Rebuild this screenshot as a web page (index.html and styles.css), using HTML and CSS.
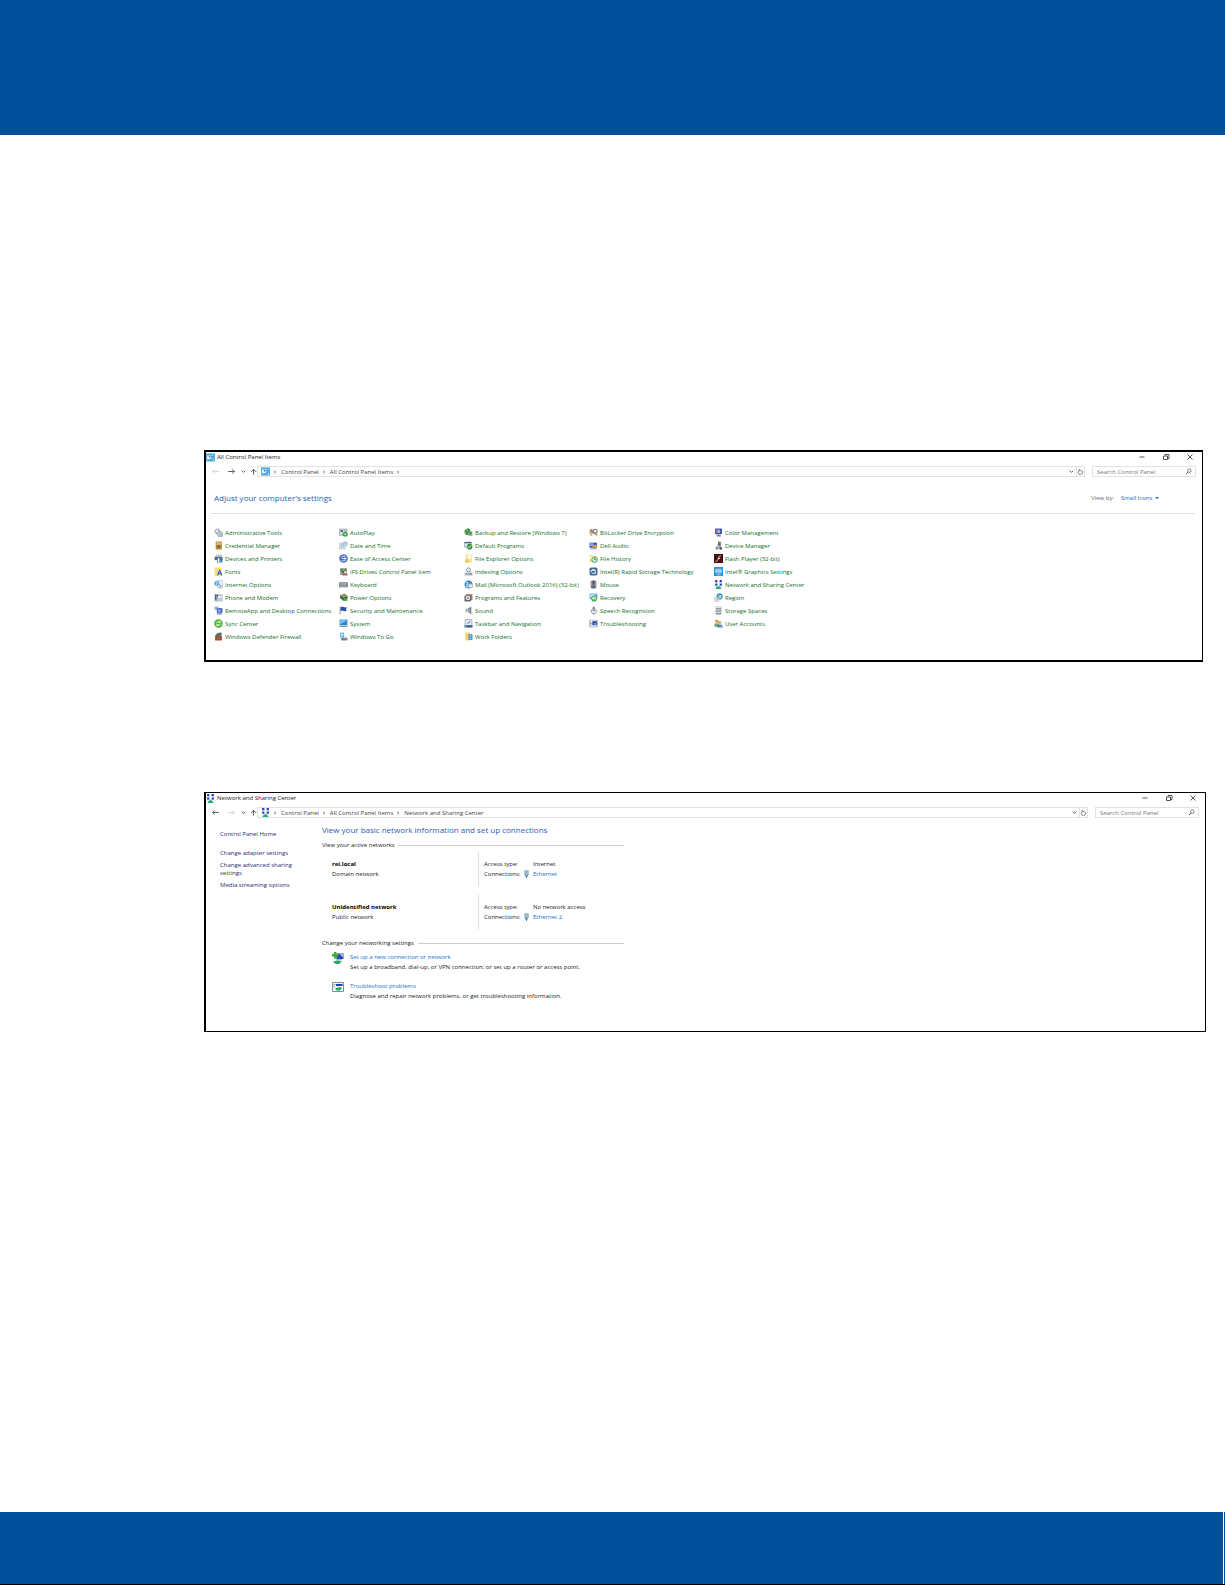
FILE: index.html
```
<!DOCTYPE html>
<html lang="en">
<head>
  <meta charset="UTF-8" />
  <title>Network setup</title>
  <meta name="viewport" content="width=device-width, initial-scale=1.0" />
  <link rel="stylesheet" href="styles.css">
</head>
<body>
  <!-- icon set -->
  <svg class="sprite" aria-hidden="true">
    <symbol id="cpanel" viewBox="0 0 16 16"><rect y="1" width="16" height="14" fill="#2b9be0"/><rect x="1" y="3" width="14" height="11" fill="#8fd4f7"/><circle cx="5" cy="8" r="3" fill="#fff"/><path d="M5 8V5a3 3 0 0 1 3 3z" fill="#1266b0"/><path d="M10 6h4M10 9h4M3 12.500h9" stroke="#1266b0" stroke-width="1.500"/></symbol>
    <symbol id="netcenter" viewBox="0 0 16 16"><path d="M2 0h4v4H2zM10 0h4v4h-4zM2 6h4v4H2zM10 6h4v4h-4z" fill="#2a3fb8"/><path d="M1 5h6M9 5h6M1 11h5M10 11h5" stroke="#a9bbd6" fill="none"/><path d="M3 14l5-4 5 4v2H3z" fill="#1fae6b"/></symbol>
    <symbol id="gears" viewBox="0 0 16 16"><circle cx="6" cy="6" r="4" fill="#e3e8ec" stroke="#8d99a3" stroke-width="2.500" stroke-dasharray="2 1"/><path d="M7 7h8v8H7z" fill="#dfe5ea" stroke="#7d8c99"/><path d="M9 9v5M11 9v5M13 9v5" stroke="#7d8c99"/></symbol>
    <symbol id="safe" viewBox="0 0 16 16"><rect x="3" y="1" width="11" height="14" rx="1" fill="#b98a3c"/><rect x="4" y="2" width="9" height="5" fill="#d9b36b"/><circle cx="8.500" cy="10" r="2.500" fill="#7d5a22"/></symbol>
    <symbol id="printer" viewBox="0 0 16 16"><path d="M4 1h9l2 4H2z" fill="#b9c6d2"/><path d="M1 5h14v6H1z" fill="#586b7c"/><rect x="6" y="7" width="4" height="8" fill="#fff" stroke="#586b7c"/><rect x="11" y="8" width="4" height="7" fill="#2f80c8"/></symbol>
    <symbol id="fonts" viewBox="0 0 16 16"><path d="M1 1h10l3 3v11H1z" fill="#fbdc7c"/><path d="M6 15l4-9 4 9M8 12h5" fill="none" stroke="#1d67ad" stroke-width="2"/></symbol>
    <symbol id="internet" viewBox="0 0 16 16"><path d="M7 1h8v13H7z" fill="#eef4f9" stroke="#93a8ba"/><circle cx="5" cy="6" r="4.500" fill="#5faede"/><path d="M3 3l3 2-2 4" stroke="#fff" fill="none"/><path d="M9 8l3 2-2 4" stroke="#4b86b5" stroke-width="1.500" fill="none"/></symbol>
    <symbol id="phone" viewBox="0 0 16 16"><rect x="1" y="3" width="14" height="12" fill="#9eacba"/><path d="M3 2v10M6 2v4" stroke="#485868" stroke-width="2"/><rect x="7" y="5" width="7" height="4" fill="#e7f2fb"/><path d="M6 11h8M6 13h8" stroke="#fff"/></symbol>
    <symbol id="remote" viewBox="0 0 16 16"><path d="M1 1h7v6H1z" fill="#9fb3c6"/><path d="M5 4h10v8H5z" fill="#3b53bd"/><path d="M6 5l8 3-6 3z" fill="#8eb7f0"/><path d="M5 14h9" stroke="#6b7888" stroke-width="2"/></symbol>
    <symbol id="sync" viewBox="0 0 16 16"><circle cx="8" cy="8" r="7.500" fill="#45b32f"/><path d="M4 8a4 4 0 0 1 7-2M12 8a4 4 0 0 1-7 2M11 3v3H8M5 13v-3h3" fill="none" stroke="#fff" stroke-width="1.500"/></symbol>
    <symbol id="firewall" viewBox="0 0 16 16"><path d="M2 6h12v9H2z" fill="#93462f"/><path d="M2 9h12M2 12h12M6 6v3M10 9v3M6 12v3" stroke="#b87a62"/><path d="M3 7c0-4 6-6 9-6l3 3c-3 0-5 3-7 4z" fill="#45705e"/></symbol>
    <symbol id="autoplay" viewBox="0 0 16 16"><path d="M1 2h13v11H1z" fill="#d4dde4" stroke="#74838f"/><path d="M3 4h4v3H3z" fill="#35566e"/><path d="M9 5h4M9 7h4" stroke="#74838f"/><circle cx="11" cy="11" r="4.500" fill="#36a93f"/><path d="M10 9l3 2-3 2z" fill="#fff"/></symbol>
    <symbol id="datetime" viewBox="0 0 16 16"><path d="M1 4h10v10H1z" fill="#eaf2f8" stroke="#9db3c4"/><path d="M3 7h6M3 10h6M4 5v8M7 5v8" stroke="#8fb5d2"/><circle cx="11" cy="5" r="4" fill="#cfe5f5" stroke="#7ba3c0"/><path d="M11 3v2h2" fill="none" stroke="#47708e"/></symbol>
    <symbol id="access" viewBox="0 0 16 16"><circle cx="8" cy="8" r="7.500" fill="#4b69c7"/><path d="M4 6a5 5 0 0 1 8-1M12 10a5 5 0 0 1-8 1M5 8h7M10 6l2 2-2 2" fill="none" stroke="#fff" stroke-width="1.500"/></symbol>
    <symbol id="ifs" viewBox="0 0 16 16"><path d="M2 2h12v12H2z" fill="#90a08e"/><path d="M3 3l5 5 5-5v3l-5 5-5-5z" fill="#36683a"/><path d="M6 12h9v3H6z" fill="#bb4a56"/><circle cx="11" cy="9" r="2" fill="#f2f2f2"/></symbol>
    <symbol id="keyboard" viewBox="0 0 16 16"><rect y="4" width="16" height="9" fill="#7f8991"/><path d="M1 6h14M1 8.500h14M3 11h10" stroke="#c9cfd4" stroke-dasharray="1.500 .5"/></symbol>
    <symbol id="power" viewBox="0 0 16 16"><path d="M2 4l8-3 5 4-8 4z" fill="#7e9b6b"/><path d="M2 4v5l5 4V8zM15 5v5l-8 4V9z" fill="#394f38"/><path d="M8 9h7v5H8z" fill="#4aa253"/></symbol>
    <symbol id="flag" viewBox="0 0 16 16"><path d="M2 1v14" stroke="#93a3b6" stroke-width="2"/><path d="M3 2c4-2 6 2 12 0l-3 4 2 3c-5 1-7-2-11 0z" fill="#2b4fa8"/></symbol>
    <symbol id="system" viewBox="0 0 16 16"><rect x="1" y="1" width="14" height="10" fill="#2d8ad6"/><path d="M2 2h12L2 9z" fill="#83c9f5"/><path d="M1 13h14" stroke="#8296a6" stroke-width="2.500"/></symbol>
    <symbol id="togo" viewBox="0 0 16 16"><path d="M2 1h7v9H2z" fill="#5cb7e6"/><path d="M2 5h7M5 1v9" stroke="#fff"/><path d="M4 10h11v5H4z" fill="#70818f"/><path d="M9 8h5v3H9z" fill="#d2dbe2"/></symbol>
    <symbol id="backup" viewBox="0 0 16 16"><circle cx="6" cy="7" r="5.500" fill="#78b96c"/><path d="M6 1l4 3-4 3M3 4l3 8" fill="none" stroke="#2a7a35" stroke-width="2"/><path d="M8 6h7v8H8z" fill="#98a6b0"/><circle cx="11" cy="9" r="3" fill="#47995b"/></symbol>
    <symbol id="defaults" viewBox="0 0 16 16"><path d="M1 2h12v9H1z" fill="#dfe6ec" stroke="#788995"/><path d="M1 3h12" stroke="#3c5f85" stroke-width="2"/><circle cx="10" cy="10" r="5" fill="#30973d"/><path d="M7 10l2 2 4-4" stroke="#fff" stroke-width="1.500" fill="none"/></symbol>
    <symbol id="explorer" viewBox="0 0 16 16"><path d="M3 1h11v14H3z" fill="#fbdd85"/><path d="M6 2h7v7H6z" fill="#fff8df"/><path d="M2 10h7v5H2z" fill="#e6b84a"/><path d="M4 12h4" stroke="#fff"/></symbol>
    <symbol id="indexing" viewBox="0 0 16 16"><path d="M1 10h14v5H1z" fill="#a6b1bb"/><path d="M3 9l2-3h7l2 3z" fill="#dbe2e8"/><circle cx="8" cy="5" r="3.500" fill="#eef5fa" stroke="#71808d" stroke-width="1.500"/><path d="M10 12h4" stroke="#41586c"/></symbol>
    <symbol id="mail" viewBox="0 0 16 16"><circle cx="8" cy="8" r="7" fill="#3d8cc9"/><path d="M3 4c4 0 5 2 3 4s-1 4 1 6" stroke="#c5e4f6" stroke-width="2" fill="none"/><path d="M8 7h7v6H8z" fill="#fff" stroke="#8097aa"/><path d="M8 7l3 3 4-3" stroke="#8097aa" fill="none"/></symbol>
    <symbol id="programs" viewBox="0 0 16 16"><path d="M3 2h12v11H3z" fill="#96836a"/><path d="M1 5h11v10H1z" fill="#555c62"/><circle cx="7" cy="9" r="4" fill="#e7eaed"/><circle cx="7" cy="9" r="1.500" fill="#555c62"/></symbol>
    <symbol id="sound" viewBox="0 0 16 16"><path d="M3 5h4l6-4v14l-5-4H3z" fill="#79828a"/><path d="M4 6h3v4H4z" fill="#dde1e4"/><path d="M9 5v7" stroke="#b7bec3" stroke-width="2"/></symbol>
    <symbol id="taskbar" viewBox="0 0 16 16"><path d="M2 1h12v13H2z" fill="#e7f0f8" stroke="#6e8498"/><path d="M1 11h14v4H1z" fill="#34588b"/><path d="M5 8l5-5 2 1-5 5z" fill="#6d95c0"/><path d="M2 13h3" stroke="#fff"/></symbol>
    <symbol id="workfolders" viewBox="0 0 16 16"><path d="M2 1h9v14H2z" fill="#f8d567"/><path d="M8 4h7v10H8z" fill="#2d88c8"/><path d="M10 6h3v2h-3zM10 10h3v2h-3z" fill="#fff"/></symbol>
    <symbol id="bitlocker" viewBox="0 0 16 16"><path d="M1 3h8v7H1z" fill="#b4a18a"/><path d="M3 2l3 5 4 1 4 5" fill="none" stroke="#b3872d" stroke-width="2.500"/><circle cx="11" cy="6" r="3.500" fill="none" stroke="#7c8792" stroke-width="2"/><circle cx="4" cy="12" r="2" fill="#d8ad45"/></symbol>
    <symbol id="audio" viewBox="0 0 16 16"><path d="M1 3h13v9H1z" fill="#3453ae"/><path d="M2 4h6v5H2z" fill="#8bace9"/><path d="M6 9l5-3 4 2-2 3H6z" fill="#e39b39"/><path d="M3 14h10" stroke="#778" stroke-width="1.500"/></symbol>
    <symbol id="history" viewBox="0 0 16 16"><path d="M1 2h5l2 2h6v10H1z" fill="#f5d473"/><path d="M2 4h5v7H2z" fill="#fff3ca"/><circle cx="10" cy="10" r="5" fill="#d8ecd7" stroke="#3a9b4a" stroke-width="1.500"/><path d="M10 7v3h3" fill="none" stroke="#277238" stroke-width="1.500"/></symbol>
    <symbol id="rapid" viewBox="0 0 16 16"><rect x="1" y="1" width="14" height="14" rx="3" fill="#3c6692"/><path d="M4 10a4 4 0 1 1 5 2M4 6h7M5 11h7" fill="none" stroke="#fff" stroke-width="1.500"/></symbol>
    <symbol id="mouse" viewBox="0 0 16 16"><rect x="3" y="1" width="10" height="14" rx="3" fill="#626b73"/><path d="M5 3v8M11 3v8" stroke="#bac1c7" stroke-width="1.500"/><path d="M8 2v5" stroke="#222"/></symbol>
    <symbol id="recovery" viewBox="0 0 16 16"><path d="M1 1h14v10H1z" fill="#59aee0"/><path d="M2 2h11L2 9z" fill="#b8e1f7"/><circle cx="9" cy="10" r="5" fill="#46a94b"/><path d="M7 10a2.500 2.500 0 1 1 3 2M6 8l1 3 3-1" fill="none" stroke="#fff" stroke-width="1.500"/></symbol>
    <symbol id="speech" viewBox="0 0 16 16"><rect x="6" y="1" width="5" height="9" rx="2.500" fill="#9aa4ad"/><path d="M4 6v3a4.500 4.500 0 0 0 9 0V6M8.500 13v3M7 3h3M7 5h3" fill="none" stroke="#7f8991" stroke-width="1.500"/></symbol>
    <symbol id="trouble" viewBox="0 0 16 16"><path d="M1 2h14v12H1z" fill="#eef1f4" stroke="#8a97a3"/><path d="M6 4h8v7H6z" fill="#233fa5"/><path d="M3 5v7M2 8h3" stroke="#6e7c88"/><path d="M8 9l4-3v5z" fill="#8bbcf1"/></symbol>
    <symbol id="color" viewBox="0 0 16 16"><path d="M2 1h12v10H2z" fill="#3344ad"/><path d="M6 3h4v6H6z" fill="#f4e15e"/><path d="M8 3h3v6H8z" fill="#53c2e8"/><path d="M3 3h3v6H3z" fill="#b054c7"/><path d="M8 11v3M5 14h7" stroke="#656e7c" stroke-width="2"/></symbol>
    <symbol id="device" viewBox="0 0 16 16"><path d="M7 1h5v8H7z" fill="#59636c"/><path d="M8 3h2" stroke="#fff"/><path d="M3 11l3-3h5l3 3v3H3z" fill="#a9b3bb"/><path d="M4 12h2v3H4zM10 11h4v4h-4z" fill="#3d4853"/></symbol>
    <symbol id="flash" viewBox="0 0 16 16"><rect x="0" y="0" width="16" height="16" fill="#4a0d10"/><path d="M12 3c-4 0-4 5-5 7-1 2-2 3-4 3M7 8h4" fill="none" stroke="#fff" stroke-width="1.500"/></symbol>
    <symbol id="intel" viewBox="0 0 16 16"><rect width="16" height="16" fill="#2f93d2"/><path d="M2 3h12v8H2z" fill="#7dc8ef"/><path d="M3 9c4-6 8 2 11-3M8 11v3M5 14h7" stroke="#dff3fd" fill="none"/></symbol>
    <symbol id="region" viewBox="0 0 16 16"><circle cx="10" cy="6" r="5.500" fill="#4293c4"/><path d="M7 3l3 2 3-2v5l-3 2z" fill="#b3e0ee"/><circle cx="5" cy="11" r="4" fill="#eef2f5" stroke="#8796a3"/><path d="M5 9v2h2" fill="none" stroke="#4d5d6a"/></symbol>
    <symbol id="storage" viewBox="0 0 16 16"><path d="M3 1h10v14H3z" fill="#a7b0b7"/><path d="M4 3h8M4 7h8M4 11h8" stroke="#fff" stroke-width="1.500"/><path d="M3 5h10M3 9h10M3 14h10" stroke="#626c74"/></symbol>
    <symbol id="users" viewBox="0 0 16 16"><circle cx="5" cy="4" r="3" fill="#cfa15e"/><path d="M1 8h8v6H1z" fill="#76a657"/><circle cx="10" cy="6" r="3" fill="#d9b078"/><path d="M6 10h8v5H6z" fill="#4f78b5"/><path d="M12 11h4v4h-4z" fill="#9ea8b0"/></symbol>
    <symbol id="plug" viewBox="0 0 10 16"><rect x="1" y="1" width="8" height="9" rx="1" fill="#b6cfdf" stroke="#7f9fb4"/><path d="M4 2v5M6 2v5" stroke="#5f8199"/><path d="M2 9h6v4H2z" fill="#5b9dca"/><path d="M5 12v4" stroke="#3b8bc2" stroke-width="2"/></symbol>
    <symbol id="newconn" viewBox="0 0 24 24"><path d="M9 3h14v11H9z" fill="#2a45b5"/><path d="M15 4h7v7z" fill="#9dc3f4"/><path d="M4 0h5v4h4v5H9v4H4V9H0V4h4z" fill="#39b034"/><path d="M8 14h12v3H8z" fill="#a7b6c4"/><path d="M2 19l9-2 9 2-6 5H7z" fill="#23a768"/></symbol>
    <symbol id="fixnet" viewBox="0 0 24 24"><path d="M1 3h22v18H1z" fill="#f3f6f9" stroke="#8090a0" stroke-width="2"/><path d="M8 6h13v4H8z" fill="#2340ae"/><path d="M3 7h4M3 11h3" stroke="#8a99a6" stroke-width="2"/><path d="M6 15l9-3 5 2-4 5H9z" fill="#1fae65"/></symbol>
    <symbol id="left" viewBox="0 0 16 16"><path d="M14 8H3M7 4L3 8l4 4" fill="none" stroke="currentColor" stroke-width="1.500"/></symbol>
    <symbol id="right" viewBox="0 0 16 16"><path d="M2 8h11M9 4l4 4-4 4" fill="none" stroke="currentColor" stroke-width="1.500"/></symbol>
    <symbol id="up" viewBox="0 0 16 16"><path d="M8 15V3M2 9l6-6 6 6" fill="none" stroke="currentColor" stroke-width="2"/></symbol>
    <symbol id="down" viewBox="0 0 16 16"><path d="M4 6l4 4 4-4" fill="none" stroke="currentColor" stroke-width="2"/></symbol>
    <symbol id="sep" viewBox="0 0 16 16"><path d="M6 5l4 3-4 3" fill="none" stroke="currentColor" stroke-width="2"/></symbol>
    <symbol id="refresh" viewBox="0 0 16 16"><path d="M5 6a5 5 0 1 0 6 0M5 2v4h5" fill="none" stroke="currentColor" stroke-width="1.500"/></symbol>
    <symbol id="search" viewBox="0 0 16 16"><circle cx="10" cy="6" r="4" fill="none" stroke="currentColor" stroke-width="1.500"/><path d="M7 9l-5 5" stroke="currentColor" stroke-width="2"/></symbol>
    <symbol id="min" viewBox="0 0 16 16"><path d="M3 8h10" stroke="currentColor" stroke-width="1.500"/></symbol>
    <symbol id="restore" viewBox="0 0 16 16"><path d="M3 6h8v7H3zM6 5V3h8v8h-3" fill="none" stroke="currentColor" stroke-width="1.500"/></symbol>
    <symbol id="close" viewBox="0 0 16 16"><path d="M3 3l10 10M13 3L3 13" stroke="currentColor" stroke-width="1.500"/></symbol>
  </svg>

  <header class="band"></header>

  <main class="page">
    <section class="window window-all">
      <div class="titlebar">
        <svg class="icon"><use href="#cpanel"/></svg>
        <span class="title">All Control Panel Items</span>
        <div class="controls">
          <button aria-label="Minimize"><svg><use href="#min"/></svg></button>
          <button aria-label="Restore"><svg><use href="#restore"/></svg></button>
          <button aria-label="Close"><svg><use href="#close"/></svg></button>
        </div>
      </div>
      <div class="toolbar">
        <nav class="history">
          <button class="off" aria-label="Back"><svg><use href="#left"/></svg></button>
          <button aria-label="Forward"><svg><use href="#right"/></svg></button>
          <button class="small" aria-label="Recent"><svg><use href="#down"/></svg></button>
          <button class="small" aria-label="Up"><svg><use href="#up"/></svg></button>
        </nav>
        <div class="address">
          <svg class="icon"><use href="#cpanel"/></svg>
          <svg class="sep"><use href="#sep"/></svg>
          <a href="#">Control Panel</a>
          <svg class="sep"><use href="#sep"/></svg>
          <a href="#">All Control Panel Items</a>
          <svg class="sep"><use href="#sep"/></svg>
          <button class="drop" aria-label="Previous locations"><svg><use href="#down"/></svg></button>
          <button class="reload" aria-label="Refresh"><svg><use href="#refresh"/></svg></button>
        </div>
        <label class="search">
          <input type="text" placeholder="Search Control Panel" aria-label="Search Control Panel">
          <svg><use href="#search"/></svg>
        </label>
      </div>
      <div class="settings-head">
        <h1>Adjust your computer's settings</h1>
        <label for="view">View by:</label>
        <select id="view"><option>Small icons</option><option>Large icons</option></select>
        <svg class="caret" viewBox="0 0 8 8"><path d="M0 2h8L4 6z" fill="#1a66b8"/></svg>
      </div>
      <ul class="items">
        <li><a href="#"><svg class="icon"><use href="#gears"/></svg>Administrative Tools</a></li>
        <li><a href="#"><svg class="icon"><use href="#safe"/></svg>Credential Manager</a></li>
        <li><a href="#"><svg class="icon"><use href="#printer"/></svg>Devices and Printers</a></li>
        <li><a href="#"><svg class="icon"><use href="#fonts"/></svg>Fonts</a></li>
        <li><a href="#"><svg class="icon"><use href="#internet"/></svg>Internet Options</a></li>
        <li><a href="#"><svg class="icon"><use href="#phone"/></svg>Phone and Modem</a></li>
        <li><a href="#"><svg class="icon"><use href="#remote"/></svg>RemoteApp and Desktop Connections</a></li>
        <li><a href="#"><svg class="icon"><use href="#sync"/></svg>Sync Center</a></li>
        <li><a href="#"><svg class="icon"><use href="#firewall"/></svg>Windows Defender Firewall</a></li>
        <li><a href="#"><svg class="icon"><use href="#autoplay"/></svg>AutoPlay</a></li>
        <li><a href="#"><svg class="icon"><use href="#datetime"/></svg>Date and Time</a></li>
        <li><a href="#"><svg class="icon"><use href="#access"/></svg>Ease of Access Center</a></li>
        <li><a href="#"><svg class="icon"><use href="#ifs"/></svg>IFS Drives Control Panel Item</a></li>
        <li><a href="#"><svg class="icon"><use href="#keyboard"/></svg>Keyboard</a></li>
        <li><a href="#"><svg class="icon"><use href="#power"/></svg>Power Options</a></li>
        <li><a href="#"><svg class="icon"><use href="#flag"/></svg>Security and Maintenance</a></li>
        <li><a href="#"><svg class="icon"><use href="#system"/></svg>System</a></li>
        <li><a href="#"><svg class="icon"><use href="#togo"/></svg>Windows To Go</a></li>
        <li><a href="#"><svg class="icon"><use href="#backup"/></svg>Backup and Restore (Windows 7)</a></li>
        <li><a href="#"><svg class="icon"><use href="#defaults"/></svg>Default Programs</a></li>
        <li><a href="#"><svg class="icon"><use href="#explorer"/></svg>File Explorer Options</a></li>
        <li><a href="#"><svg class="icon"><use href="#indexing"/></svg>Indexing Options</a></li>
        <li><a href="#"><svg class="icon"><use href="#mail"/></svg>Mail (Microsoft Outlook 2016) (32-bit)</a></li>
        <li><a href="#"><svg class="icon"><use href="#programs"/></svg>Programs and Features</a></li>
        <li><a href="#"><svg class="icon"><use href="#sound"/></svg>Sound</a></li>
        <li><a href="#"><svg class="icon"><use href="#taskbar"/></svg>Taskbar and Navigation</a></li>
        <li><a href="#"><svg class="icon"><use href="#workfolders"/></svg>Work Folders</a></li>
        <li><a href="#"><svg class="icon"><use href="#bitlocker"/></svg>BitLocker Drive Encryption</a></li>
        <li><a href="#"><svg class="icon"><use href="#audio"/></svg>Dell Audio</a></li>
        <li><a href="#"><svg class="icon"><use href="#history"/></svg>File History</a></li>
        <li><a href="#"><svg class="icon"><use href="#rapid"/></svg>Intel(R) Rapid Storage Technology</a></li>
        <li><a href="#"><svg class="icon"><use href="#mouse"/></svg>Mouse</a></li>
        <li><a href="#"><svg class="icon"><use href="#recovery"/></svg>Recovery</a></li>
        <li><a href="#"><svg class="icon"><use href="#speech"/></svg>Speech Recognition</a></li>
        <li><a href="#"><svg class="icon"><use href="#trouble"/></svg>Troubleshooting</a></li>
        <li class="first"><a href="#"><svg class="icon"><use href="#color"/></svg>Color Management</a></li>
        <li><a href="#"><svg class="icon"><use href="#device"/></svg>Device Manager</a></li>
        <li><a href="#"><svg class="icon"><use href="#flash"/></svg>Flash Player (32-bit)</a></li>
        <li><a href="#"><svg class="icon"><use href="#intel"/></svg>Intel® Graphics Settings</a></li>
        <li><a href="#"><svg class="icon"><use href="#netcenter"/></svg>Network and Sharing Center</a></li>
        <li><a href="#"><svg class="icon"><use href="#region"/></svg>Region</a></li>
        <li><a href="#"><svg class="icon"><use href="#storage"/></svg>Storage Spaces</a></li>
        <li><a href="#"><svg class="icon"><use href="#users"/></svg>User Accounts</a></li>
      </ul>
    </section>

    <section class="window window-net">
      <div class="titlebar">
        <svg class="icon"><use href="#netcenter"/></svg>
        <span class="title">Network and Sharing Center</span>
        <div class="controls">
          <button aria-label="Minimize"><svg><use href="#min"/></svg></button>
          <button aria-label="Restore"><svg><use href="#restore"/></svg></button>
          <button aria-label="Close"><svg><use href="#close"/></svg></button>
        </div>
      </div>
      <div class="toolbar">
        <nav class="history">
          <button aria-label="Back"><svg><use href="#left"/></svg></button>
          <button class="off" aria-label="Forward"><svg><use href="#right"/></svg></button>
          <button class="small" aria-label="Recent"><svg><use href="#down"/></svg></button>
          <button class="small" aria-label="Up"><svg><use href="#up"/></svg></button>
        </nav>
        <div class="address">
          <svg class="icon"><use href="#netcenter"/></svg>
          <svg class="sep"><use href="#sep"/></svg>
          <a href="#">Control Panel</a>
          <svg class="sep"><use href="#sep"/></svg>
          <a href="#">All Control Panel Items</a>
          <svg class="sep"><use href="#sep"/></svg>
          <a href="#">Network and Sharing Center</a>
          <button class="drop" aria-label="Previous locations"><svg><use href="#down"/></svg></button>
          <button class="reload" aria-label="Refresh"><svg><use href="#refresh"/></svg></button>
        </div>
        <label class="search">
          <input type="text" placeholder="Search Control Panel" aria-label="Search Control Panel">
          <svg><use href="#search"/></svg>
        </label>
      </div>
      <div class="columns">
        <aside class="side">
          <a class="home" href="#">Control Panel Home</a>
          <a href="#">Change adapter settings</a>
          <a href="#">Change advanced sharing settings</a>
          <a href="#">Media streaming options</a>
        </aside>
        <div class="content">
          <h1>View your basic network information and set up connections</h1>
          <h2>View your active networks</h2>
          <div class="network">
            <div class="name"><b>rei.local</b><span>Domain network</span></div>
            <dl>
              <dt>Access type:</dt><dd>Internet</dd>
              <dt>Connections:<svg class="plug"><use href="#plug"/></svg></dt><dd><a href="#">Ethernet</a></dd>
            </dl>
          </div>
          <div class="network">
            <div class="name"><b>Unidentified network</b><span>Public network</span></div>
            <dl>
              <dt>Access type:</dt><dd>No network access</dd>
              <dt>Connections:<svg class="plug"><use href="#plug"/></svg></dt><dd><a href="#">Ethernet 2</a></dd>
            </dl>
          </div>
          <h2 class="change">Change your networking settings</h2>
          <div class="task">
            <svg><use href="#newconn"/></svg>
            <div>
              <a href="#">Set up a new connection or network</a>
              <p>Set up a broadband, dial-up, or VPN connection; or set up a router or access point.</p>
            </div>
          </div>
          <div class="task">
            <svg><use href="#fixnet"/></svg>
            <div>
              <a href="#">Troubleshoot problems</a>
              <p>Diagnose and repair network problems, or get troubleshooting information.</p>
            </div>
          </div>
        </div>
      </div>
    </section>
  </main>

  <footer class="foot">
    <div class="foot-bar"></div>
    <div class="foot-edge"></div>
  </footer>
</body>
</html>
```
FILE: styles.css
```
* {
  box-sizing: border-box;
}
body {
  margin: 0;
  min-height: 100vh;
  display: flex;
  flex-direction: column;
  background: #fff;
  color: #222;
  font-family: 'Open Sans', 'Noto Sans', sans-serif;
  font-size: 6px;
  line-height: 8px;
}
h1, h2, p, ul, dl, dd {
  margin: 0;
  padding: 0;
  font-weight: normal;
}
a {
  color: inherit;
  text-decoration: none;
}
button, input, select {
  font: inherit;
  color: inherit;
  background: none;
  border: 0;
  padding: 0;
  margin: 0;
}
svg {
  display: block;
  flex: none;
}
.sprite {
  position: absolute;
  width: 0;
  height: 0;
}
.icon {
  width: 9px;
  height: 9px;
}
.band {
  height: 135px;
  background: #004f9a;
}
.page {
  flex: 1;
  padding: 315px 19px 0 204px;
}

/* windows */
.window {
  border: 1px solid #000;
  border-left-width: 2px;
}
.window-all {
  border-width: 2px 1px 2px 2px;
  margin: 0 3px 130px 0;
}
.titlebar {
  display: flex;
  align-items: center;
  height: 10px;
  gap: 2px;
}
.controls {
  display: flex;
  gap: 16px;
  margin-left: auto;
  padding-right: 8px;
}
.controls svg {
  width: 8px;
  height: 8px;
}
.toolbar {
  display: flex;
  height: 11px;
  margin-top: 4px;
  padding-right: 6px;
  color: #444;
}
.history {
  display: flex;
  align-items: center;
  gap: 3px;
  width: 51px;
  padding-left: 5px;
}
.history svg {
  width: 9px;
  height: 9px;
}
.history button:nth-child(2) {
  margin: 0 1px 0 4px;
}
.history .small svg {
  width: 7px;
  height: 7px;
}
.history .off {
  color: #ccc;
}
.address {
  flex: 1;
  display: flex;
  align-items: center;
  padding-left: 3px;
  border: 1px solid #e2e2e2;
}
.address .sep {
  width: 6px;
  height: 6px;
  margin: 0 3px 0 2px;
}
.drop {
  margin-left: auto;
}
.drop svg, .reload svg {
  width: 7px;
  height: 7px;
}
.reload {
  height: 9px;
  margin-left: 1px;
  border-left: 1px solid #e2e2e2;
}
.search {
  display: flex;
  align-items: center;
  width: 104px;
  margin-left: 7px;
  padding: 0 3px 0 4px;
  border: 1px solid #e2e2e2;
}
.search input {
  flex: 1;
  min-width: 0;
  height: 8px;
}
.search input::placeholder {
  color: #777;
}
.search svg {
  width: 7px;
  height: 7px;
}
.window h1 {
  color: #2a5db0;
  font-size: 8px;
  line-height: 11px;
}

/* all items */
.settings-head {
  display: flex;
  align-items: center;
  margin: 15px 7px 0 5px;
  padding: 0 36px 10px 3px;
  border-bottom: 1px solid #dcdfe3;
  color: #667;
}
.settings-head h1 {
  margin-right: auto;
}
.settings-head select {
  appearance: none;
  margin-left: 7px;
  color: #1a66b8;
}
.caret {
  width: 4px;
  height: 4px;
  margin-left: 2px;
}
.items {
  display: grid;
  grid-template-rows: repeat(9, 13px);
  grid-auto-flow: column;
  grid-auto-columns: 125px;
  padding: 12px 0 17px 8px;
  list-style: none;
  color: #12701f;
}
.items .first {
  grid-row: 1;
}
.items a {
  display: flex;
  align-items: center;
  gap: 2px;
  height: 13px;
  white-space: nowrap;
}

/* network center */
.columns {
  display: flex;
}
.side {
  display: flex;
  flex-direction: column;
  gap: 4px;
  width: 116px;
  padding: 12px 24px 0 14px;
  color: #1f2d6b;
}
.side .home {
  margin-bottom: 7px;
}
.content {
  width: 302px;
  padding: 6px 0 30px;
}
.content h1 {
  white-space: nowrap;
}
.content h2 {
  display: flex;
  align-items: center;
  gap: 4px;
  margin: 6px 0 3px;
  font-size: 6px;
}
.content h2::after {
  content: "";
  flex: 1;
  height: 1px;
  background: #ccc;
}
.content a {
  color: #1b6fd0;
}
.network {
  display: flex;
  height: 34px;
  margin-bottom: 9px;
  padding-left: 10px;
  line-height: 10px;
}
.name {
  display: flex;
  flex-direction: column;
  width: 146px;
  padding-top: 7px;
}
.name b {
  color: #000;
}
.network dl {
  flex: 1;
  display: grid;
  grid-template-columns: 41px 1fr;
  grid-auto-rows: 10px;
  column-gap: 8px;
  padding: 7px 0 0 5px;
  border-left: 1px solid #ddd;
}
.network dt {
  display: flex;
  align-items: center;
  white-space: nowrap;
}
.plug {
  width: 5px;
  height: 8px;
  margin-left: 4px;
}
.content .change {
  margin: 10px 0 5px;
}
.task {
  display: flex;
  gap: 6px;
  padding-left: 10px;
  line-height: 10px;
  white-space: nowrap;
}
.task + .task {
  margin-top: 9px;
}
.task svg {
  width: 12px;
  height: 12px;
}

/* bottom band */
.foot {
  display: flex;
  gap: 1px;
  height: 73px;
  border-bottom: 1px solid #000;
}
.foot-bar {
  flex: 1;
  background: #004f9a;
}
.foot-edge {
  width: 1px;
  background: #004f9a;
}
```
